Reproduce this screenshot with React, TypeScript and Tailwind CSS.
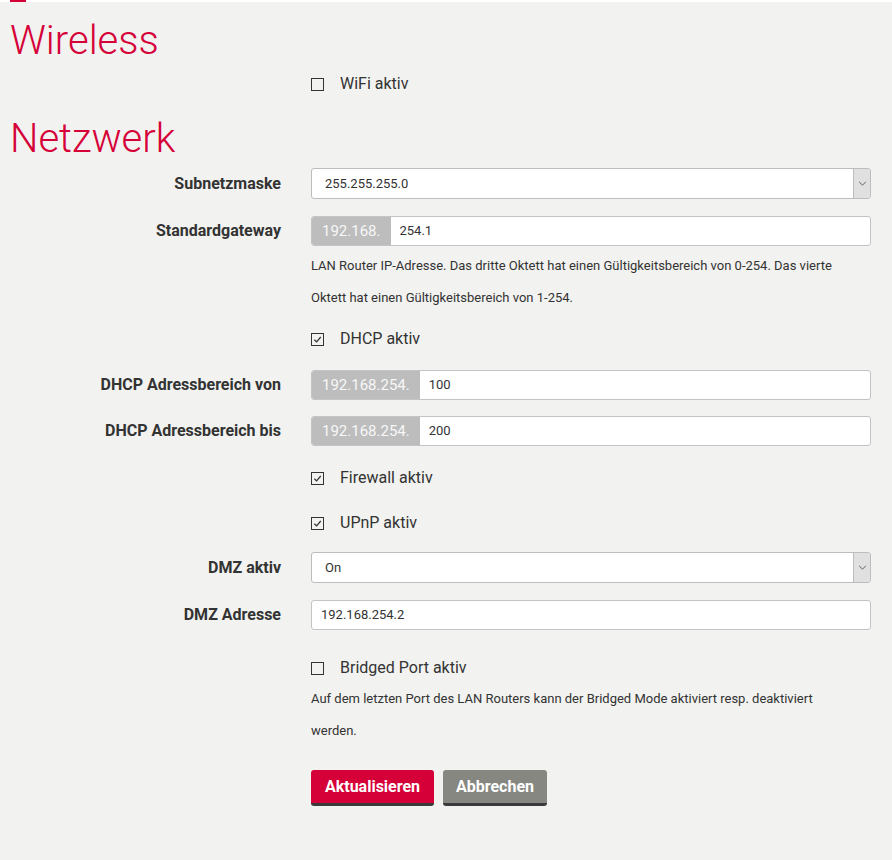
import React from "react";

function Check({ checked, label }: { checked?: boolean; label: string }) {
    return (
        <label className="flex h-[30px] items-center gap-4 text-[16px] text-[#333]">
            <span className="flex h-[13px] w-[13px] items-center justify-center border-[1.5px] border-[#333] bg-transparent">
                {checked && (
                    <svg viewBox="0 0 10 10" className="h-[9px] w-[9px]">
                        <path d="M1.5 5.2 L4 7.6 L8.6 2.2" fill="none" stroke="#333" strokeWidth="1.4" />
                    </svg>
                )}
            </span>
            {label}
        </label>
    );
}

function Row({ label, children, className = "" }: { label?: string; children: React.ReactNode; className?: string }) {
    return (
        <div className={`grid grid-cols-[281px_1fr] items-center gap-x-[30px] pr-[21px] ${className}`}>
            <div className="text-right text-[16px] font-bold text-[#333]">{label}</div>
            <div>{children}</div>
        </div>
    );
}

function Select({ value }: { value: string }) {
    return (
        <div className="flex h-[31px] items-stretch overflow-hidden rounded-[3px] border border-[#bdbdbd] bg-white">
            <div className="flex flex-1 items-center pl-[13px] text-[13px] text-[#333]">{value}</div>
            <div className="flex w-[17px] items-center justify-center border-l border-[#bdbdbd] bg-[#e0e0e0]">
                <svg viewBox="0 0 10 6" className="h-[5px] w-[9px]">
                    <path d="M1 1 L5 5 L9 1" fill="none" stroke="#555" strokeWidth="1.1" />
                </svg>
            </div>
        </div>
    );
}

function Input({ prefix, value }: { prefix?: string; value: string }) {
    return (
        <div className="flex h-[30px] items-stretch overflow-hidden rounded-[3px] border border-[#c4c4c4] bg-white">
            {prefix && (
                <div className="flex items-center bg-[#bdbdbd] px-[10px] text-[15px] text-[#f7f7f7]">{prefix}</div>
            )}
            <div className="flex flex-1 items-center pl-[9px] text-[13px] text-[#333]">{value}</div>
        </div>
    );
}

function Help({ children }: { children: React.ReactNode }) {
    return <p className="text-[13px] leading-[32px] text-[#333]">{children}</p>;
}

export default function App() {
    return (
        <div className="min-h-[860px] w-[892px] bg-[#f2f2f0] font-['Roboto',sans-serif]">
            <div className="h-[2px] bg-white">
                <div className="ml-[10px] h-[2px] w-[16px] bg-[#d50037]" />
            </div>

            <h1 className="mt-[15px] pl-[10px] text-[40px] leading-[48px] font-light text-[#d50037]">Wireless</h1>
            <Row className="mt-[4px]">
                <Check label="WiFi aktiv" />
            </Row>

            <h1 className="mt-[16px] pl-[10px] text-[40px] leading-[48px] font-light text-[#d50037]">Netzwerk</h1>

            <Row label="Subnetzmaske" className="mt-[5px]">
                <Select value="255.255.255.0" />
            </Row>
            <Row label="Standardgateway" className="mt-[17px]">
                <Input prefix="192.168." value="254.1" />
            </Row>
            <Row className="mt-[4px]">
                <Help>
                    LAN Router IP-Adresse. Das dritte Oktett hat einen Gültigkeitsbereich von 0-254. Das vierte
                    <br />
                    Oktett hat einen Gültigkeitsbereich von 1-254.
                </Help>
            </Row>
            <Row className="mt-[10px]">
                <Check checked label="DHCP aktiv" />
            </Row>
            <Row label="DHCP Adressbereich von" className="mt-[16px]">
                <Input prefix="192.168.254." value="100" />
            </Row>
            <Row label="DHCP Adressbereich bis" className="mt-[16px]">
                <Input prefix="192.168.254." value="200" />
            </Row>
            <Row className="mt-[17px]">
                <Check checked label="Firewall aktiv" />
            </Row>
            <Row className="mt-[15px]">
                <Check checked label="UPnP aktiv" />
            </Row>
            <Row label="DMZ aktiv" className="mt-[14px]">
                <Select value="On" />
            </Row>
            <Row label="DMZ Adresse" className="mt-[17px]">
                <Input value="192.168.254.2" />
            </Row>
            <Row className="mt-[23px]">
                <Check label="Bridged Port aktiv" />
            </Row>
            <Row>
                <Help>
                    Auf dem letzten Port des LAN Routers kann der Bridged Mode aktiviert resp. deaktiviert
                    <br />
                    werden.
                </Help>
            </Row>
            <Row className="mt-[23px]">
                <div className="flex gap-[9px]">
                    <button className="h-[36px] w-[123px] rounded-[3px] border-b-[3px] border-[#3a3a3a] bg-[#d50037] text-[16px] font-bold text-white">
                        Aktualisieren
                    </button>
                    <button className="h-[36px] w-[104px] rounded-[3px] border-b-[3px] border-[#3a3a3a] bg-[#878782] text-[16px] font-bold text-white">
                        Abbrechen
                    </button>
                </div>
            </Row>
        </div>
    );
}
